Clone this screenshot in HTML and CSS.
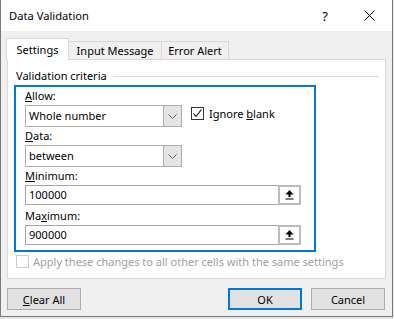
FILE: index.html
```html
<!DOCTYPE html>
<html lang="en">
<head>
    <meta charset="UTF-8">
    <meta name="viewport" content="width=device-width, initial-scale=1.0">
    <title>Data Validation</title>
    <link rel="stylesheet" href="styles.css">
</head>
<body>
<div class="window">
    <div class="titlebar">
        <span class="title">Data Validation</span>
        <span class="caption-btn help">?</span>
        <span class="caption-btn close">
            <svg width="11" height="11" viewBox="0 0 11 11"><path d="M0.5 0.5 L10.5 10.5 M10.5 0.5 L0.5 10.5" stroke="#000" stroke-width="1" fill="none"/></svg>
        </span>
    </div>

    <div class="content">
        <div class="tabs">
            <div class="tab tab-settings active">Settings</div>
            <div class="tab tab-input">Input Message</div>
            <div class="tab tab-error">Error Alert</div>
        </div>

        <div class="panel">
            <div class="group-title"><span>Validation criteria</span><span class="rule"></span></div>

            <div class="criteria">
                <div class="field-row">
                    <div class="field">
                        <div class="label"><u>A</u>llow:</div>
                        <div class="combo">
                            <span class="combo-text">Whole number</span>
                            <span class="drop"><svg width="9" height="5" viewBox="0 0 9 5"><path d="M0.5 0.5 L4.5 4.5 L8.5 0.5" stroke="#606060" fill="none"/></svg></span>
                        </div>
                    </div>
                    <div class="check ignore">
                        <span class="box"><svg width="11" height="11" viewBox="0 0 11 11"><path d="M1.5 5.5 L4 8.5 L9.5 1.5" stroke="#000" stroke-width="1.1" fill="none"/></svg></span>
                        <span>Ignore <u>b</u>lank</span>
                    </div>
                </div>

                <div class="field field-data">
                    <div class="label"><u>D</u>ata:</div>
                    <div class="combo">
                        <span class="combo-text">between</span>
                        <span class="drop"><svg width="9" height="5" viewBox="0 0 9 5"><path d="M0.5 0.5 L4.5 4.5 L8.5 0.5" stroke="#606060" fill="none"/></svg></span>
                    </div>
                </div>

                <div class="field field-min">
                    <div class="label"><u>M</u>inimum:</div>
                    <div class="textbox">
                        <span class="value">100000</span>
                        <span class="ref-btn"><svg width="9" height="10" viewBox="0 0 9 10"><path d="M4.5 0 L8.5 4.5 L0.5 4.5 Z M3.5 4 H5.5 V7 H3.5 Z M0.5 8.5 H8.5 V9.5 H0.5 Z" fill="#000"/></svg></span>
                    </div>
                </div>

                <div class="field field-max">
                    <div class="label">Ma<u>x</u>imum:</div>
                    <div class="textbox">
                        <span class="value">900000</span>
                        <span class="ref-btn"><svg width="9" height="10" viewBox="0 0 9 10"><path d="M4.5 0 L8.5 4.5 L0.5 4.5 Z M3.5 4 H5.5 V7 H3.5 Z M0.5 8.5 H8.5 V9.5 H0.5 Z" fill="#000"/></svg></span>
                    </div>
                </div>
            </div>

            <div class="check apply disabled">
                <span class="box"></span>
                <span>Apply these changes to all other cells with the same settings</span>
            </div>
        </div>

        <div class="buttons">
            <button class="btn"><u>C</u>lear All</button>
            <div class="btn-group">
                <button class="btn default">OK</button>
                <button class="btn">Cancel</button>
            </div>
        </div>
    </div>
</div>
</body>
</html>
```

FILE: styles.css
```css
body {
    margin: 0;
    background: #e4e4e4;
    font-family: "Noto Sans", sans-serif;
    font-size: 11px;
    color: #000;
}

.window {
    width: 393px;
    height: 317px;
    box-sizing: border-box;
    border: 1px solid #7a7a7a;
    border-top: none;
    background: #f0f0f0;
    display: flex;
    flex-direction: column;
}

/* Title bar */
.titlebar {
    height: 31px;
    background: #fff;
    display: flex;
    align-items: center;
}
.title { flex: 1; padding-left: 8px; font-size: 11.2px; }
.caption-btn {
    width: 46px;
    height: 31px;
    display: flex;
    align-items: center;
    justify-content: center;
}
.help { font-size: 13px; padding-left: 4px; box-sizing: border-box; }
.close svg { display: block; }

.content { padding: 7px 6px 0 6px; }

/* Tabs */
.tabs {
    display: flex;
    align-items: flex-end;
    height: 21px;
    margin-left: -1px;
}
.tab {
    box-sizing: border-box;
    height: 18px;
    border: 1px solid #d9d9d9;
    border-bottom: none;
    background: #f0f0f0;
    display: flex;
    align-items: center;
    justify-content: center;
    line-height: 16px;
}
.tab.active {
    height: 22px;
    margin-bottom: -1px;
    background: #fff;
    position: relative;
    z-index: 1;
}
.tab-settings { width: 63px; }
.tab-input { width: 94px; margin-left: -1px; padding-top: 1px; }
.tab-error { width: 68px; margin-left: -1px; padding-top: 1px; }

/* Panel */
.panel {
    box-sizing: border-box;
    height: 220px;
    border: 1px solid #d9d9d9;
    background: #fff;
}
.group-title {
    display: flex;
    align-items: center;
    height: 16px;
    line-height: 16px;
    padding: 8px 6px 0 8px;
}
.group-title .rule {
    flex: 1;
    height: 1px;
    background: #dcdcdc;
    margin-left: 6px;
}

.criteria {
    box-sizing: border-box;
    width: 302px;
    height: 167px;
    margin: 1px 0 0 6px;
    border: 2px solid #0078d7;
    padding: 1px 13px 0 9px;
}
.label { height: 16px; line-height: 16px; }

.field-row { display: flex; align-items: flex-start; }
.field .combo { margin-top: 1px; }
.field-data { margin-top: 1px; }
.field-min { margin-top: 1px; }
.field-max { margin-top: 3px; }

.combo {
    box-sizing: border-box;
    width: 157px;
    height: 22px;
    border: 1px solid #adadad;
    display: flex;
}
.combo-text {
    flex: 1;
    padding-left: 3px;
    line-height: 20px;
}
.drop {
    width: 17px;
    background: #e5e5e5;
    border-left: 1px solid #adadad;
    display: flex;
    align-items: center;
    justify-content: center;
}
.drop svg { display: block; }

.textbox {
    box-sizing: border-box;
    height: 20px;
    margin-top: 1px;
    border: 1px solid #a5a5a5;
    display: flex;
}
.textbox .value {
    flex: 1;
    padding-left: 3px;
    line-height: 18px;
}
.ref-btn {
    box-sizing: border-box;
    width: 23px;
    margin: -1px -1px -1px 0;
    border: 2px solid #bcbcbc;
    background: #fff;
    display: flex;
    align-items: center;
    justify-content: center;
}
.ref-btn svg { display: block; }

/* Checkboxes */
.check {
    display: flex;
    align-items: center;
    height: 13px;
    line-height: 13px;
}
.check .box {
    box-sizing: border-box;
    width: 13px;
    height: 13px;
    border: 1px solid #333;
    background: #fff;
    margin-right: 5px;
    display: flex;
    align-items: center;
    justify-content: center;
}
.check .box svg { display: block; }
.ignore { margin: 19px 0 0 9px; }
.apply { margin: 3px 0 0 8px; }
.apply .box { margin-right: 4px; }
.check.disabled { color: #a0a0a0; }
.check.disabled .box { border-color: #cccccc; }

/* Buttons */
.buttons {
    display: flex;
    justify-content: space-between;
    margin-top: 9px;
    padding-right: 1px;
}
.btn-group { display: flex; gap: 9px; }
.btn {
    box-sizing: border-box;
    width: 74px;
    height: 22px;
    border: 1px solid #adadad;
    background: #e1e1e1;
    font-family: "Noto Sans", sans-serif;
    font-size: 11px;
    color: #000;
    padding: 0;
}
.btn.default { border: 2px solid #0078d7; }
```
